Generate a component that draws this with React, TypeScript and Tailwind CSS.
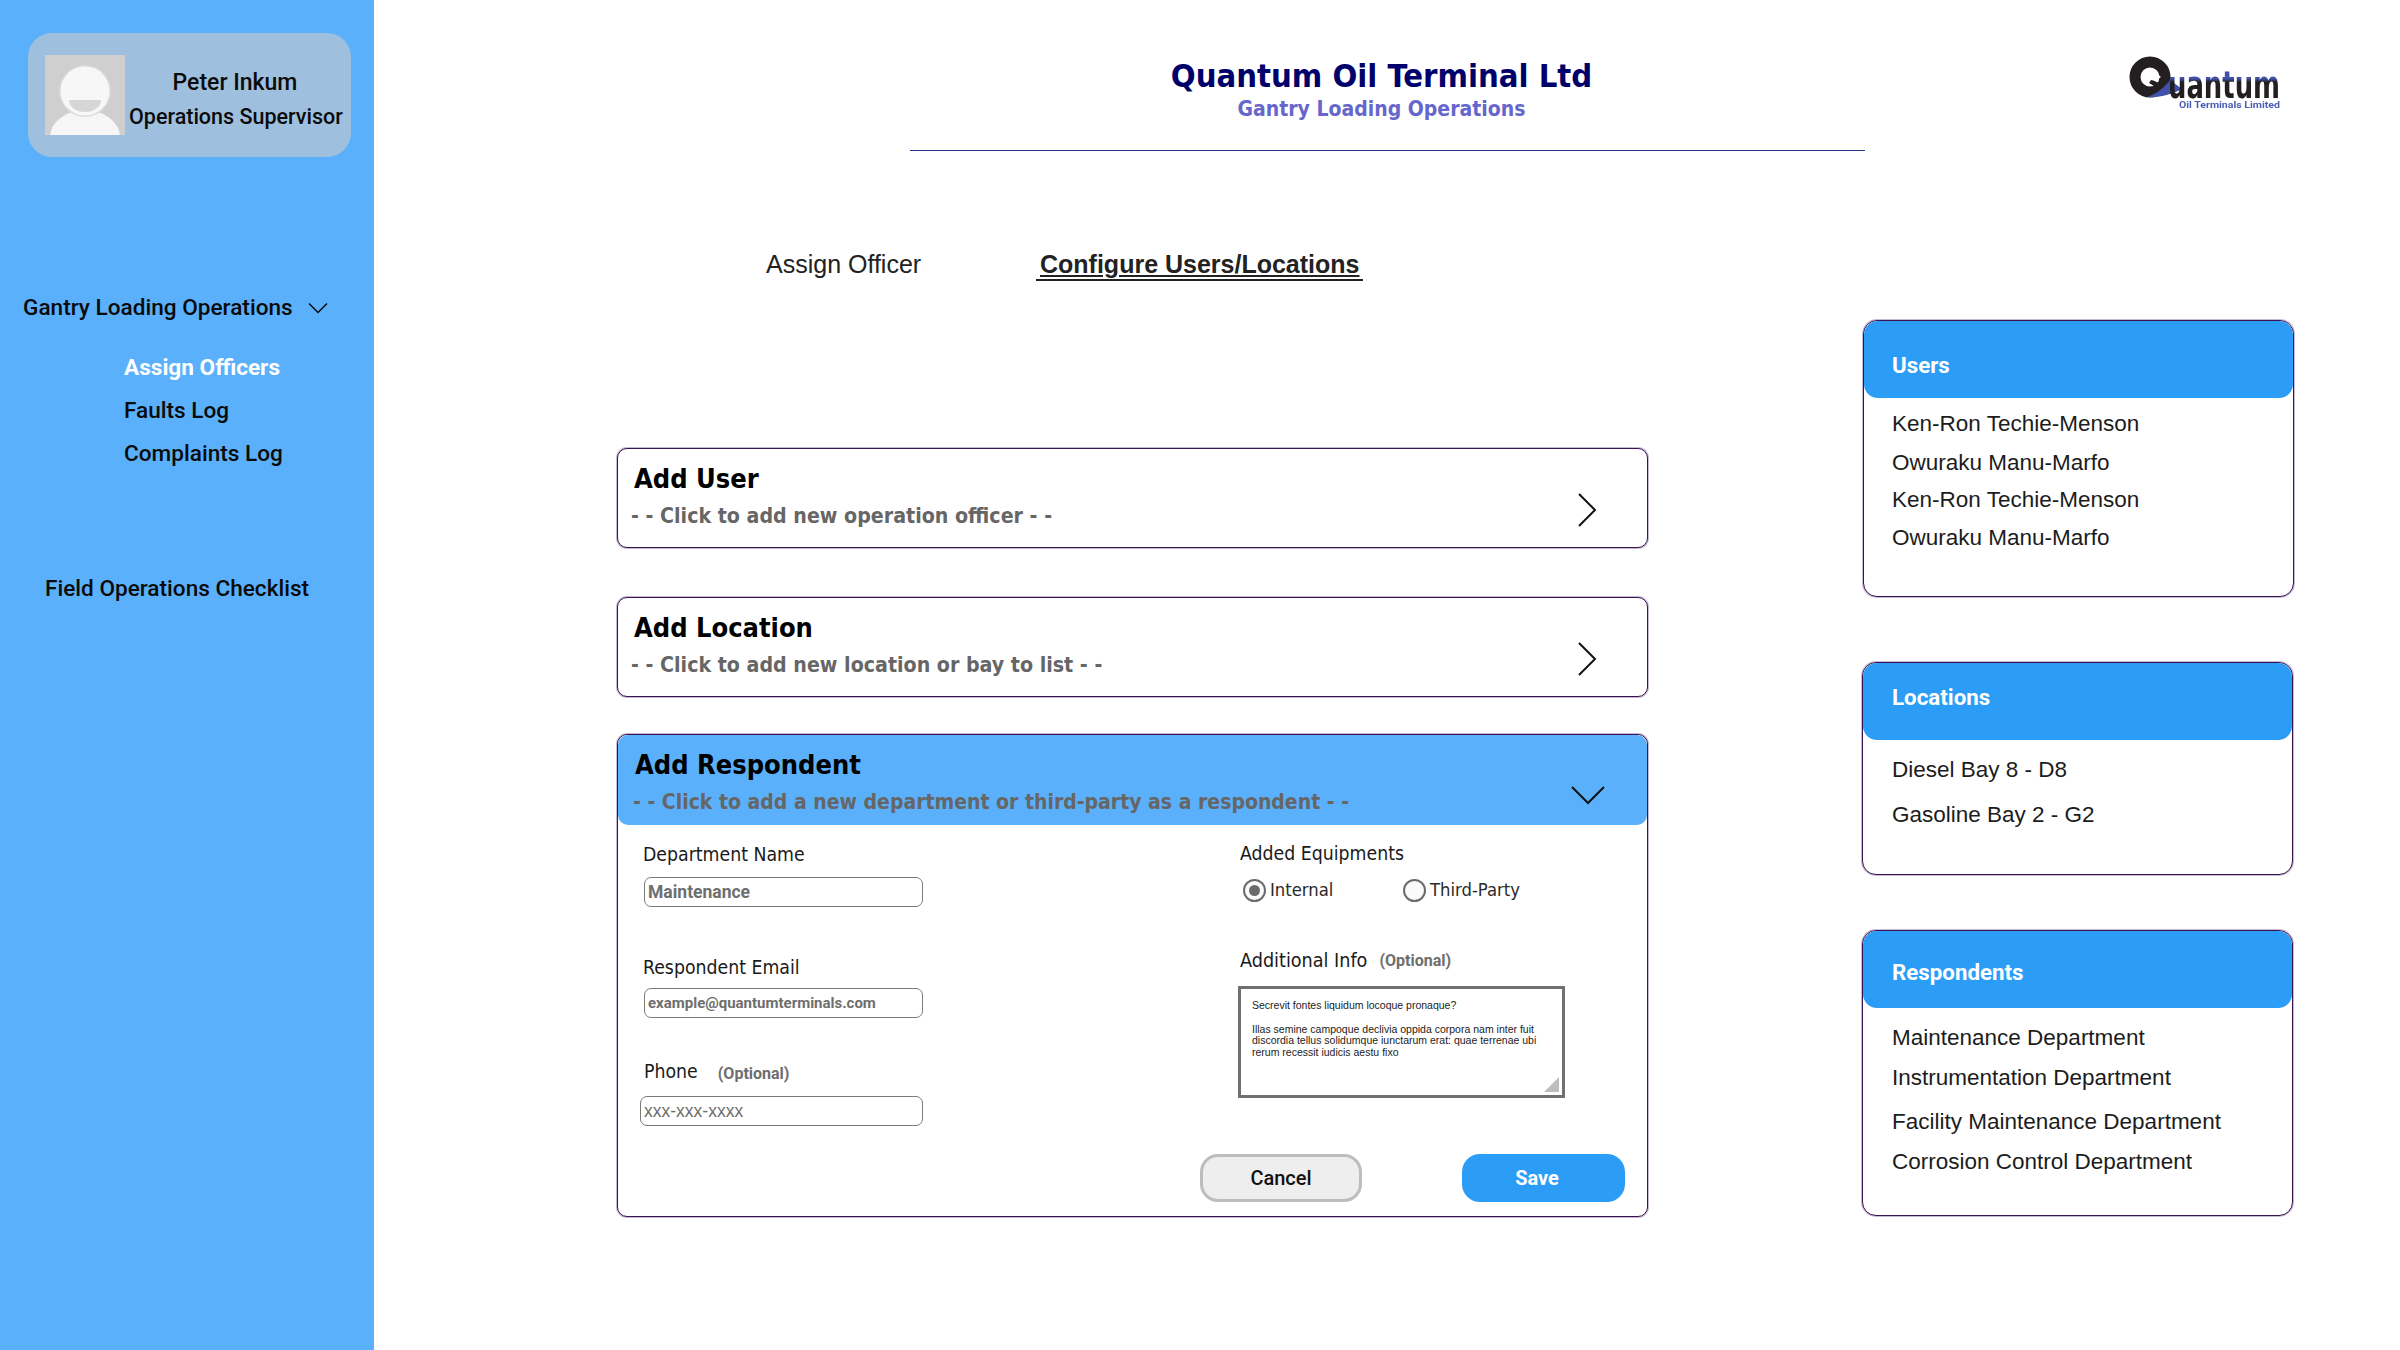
const tahoma = "font-['DejaVu_Sans_Condensed','Noto_Sans',sans-serif]";

const users = [
  { name: "Ken-Ron Techie-Menson", gap: "mt-[11px]" },
  { name: "Owuraku Manu-Marfo", gap: "mt-[9px]" },
  { name: "Ken-Ron Techie-Menson", gap: "mt-[7px]" },
  { name: "Owuraku Manu-Marfo", gap: "mt-[8px]" },
];

const locations = [
  { name: "Diesel Bay 8 - D8", gap: "mt-[15px]" },
  { name: "Gasoline Bay 2 - G2", gap: "mt-[15px]" },
];

const respondents = [
  { name: "Maintenance Department", gap: "mt-[15px]" },
  { name: "Instrumentation Department", gap: "mt-[10px]" },
  { name: "Facility Maintenance Department", gap: "mt-[14px]" },
  { name: "Corrosion Control Department", gap: "mt-[10px]" },
];

function Avatar() {
  return (
    <svg width="80" height="80" viewBox="0 0 80 80" className="shrink-0">
      <rect width="80" height="80" fill="#CFCFCF" />
      <ellipse cx="40" cy="82" rx="35" ry="27" fill="#F6F6F6" />
      <circle cx="40" cy="36" r="26" fill="#DADADA" />
      <circle cx="40" cy="36" r="24.5" fill="#F7F7F7" />
      <path d="M24 45h32a16 12 0 0 1-32 0z" fill="#D6D6D6" />
    </svg>
  );
}

function Logo() {
  return (
    <svg width="200" height="60" viewBox="0 0 200 60" className="shrink-0 blur-[0.4px]">
      <defs>
        <linearGradient id="quantum-fill" gradientUnits="userSpaceOnUse" x1="0" y1="0" x2="0" y2="44">
          <stop offset="0.56" stopColor="#3F51A8" />
          <stop offset="0.64" stopColor="#231F20" />
        </linearGradient>
      </defs>
      <circle cx="23" cy="23" r="15" fill="none" stroke="#231F20" strokeWidth="11" />
      <path d="M14 22c5-5 13-5 20 1l-5 3c-5-1-10-2-15-4z" fill="#fff" />
      <path d="M24 26c6 1 13 6 20 12l-6 2c-6-5-11-8-16-11z" fill="#231F20" />
      <path d="M20 43c9-3 17-9 23-17l12 9c-10 5-22 9-35 8z" fill="#3F51A8" />
      <text x="41" y="44" fontFamily="'DejaVu Sans', sans-serif" fontWeight="700" fontSize="37" textLength="112" lengthAdjust="spacingAndGlyphs" fill="url(#quantum-fill)">uantum</text>
      <text x="52" y="54" fontFamily="'Roboto', sans-serif" fontWeight="700" fontSize="9.5" textLength="101" lengthAdjust="spacingAndGlyphs" fill="#4A5DB5">Oil Terminals Limited</text>
    </svg>
  );
}

function Sidebar() {
  return (
    <aside className="w-[374px] shrink-0 bg-[#5AB0FB] pt-[33px] font-['Roboto',sans-serif] text-[#0B0B0B]">
      <div className="ml-[28px] flex h-[124px] w-[323px] items-start rounded-[24px] bg-[#9EC0DE] pl-[17px] pt-[22px]">
        <Avatar />
        <div className="ml-[4px] w-[212px] text-center font-medium">
          <div className="mt-[11px] h-[34px] text-[23px] leading-[34px]">Peter Inkum</div>
          <div className="h-[34px] whitespace-nowrap text-[21.5px] leading-[34px]">Operations Supervisor</div>
        </div>
      </div>

      <div className="ml-[23px] mt-[137px] flex h-[28px] items-center text-[22.6px] font-medium leading-[28px]">
        <span>Gantry Loading Operations</span>
        <svg width="20" height="12" viewBox="0 0 20 12" fill="none" stroke="#0B0B0B" strokeWidth="1.5" className="ml-[15px]">
          <path d="M1 1.5l9 9 9-9" />
        </svg>
      </div>

      <div className="ml-[124px] mt-[24px] text-[22.6px] font-medium">
        <div className="h-[43px] font-bold leading-[43px] text-white">Assign Officers</div>
        <div className="h-[43px] leading-[43px]">Faults Log</div>
        <div className="h-[43px] leading-[43px]">Complaints Log</div>
      </div>

      <div className="ml-[45px] mt-[100px] h-[28px] text-[22.6px] font-medium leading-[28px]">Field Operations Checklist</div>
    </aside>
  );
}

function Collapsed({ title, hint, gap }: { title: string; hint: string; gap: string }) {
  return (
    <div className={`${gap} flex h-[100px] items-start rounded-[10px] border-[1.5px] border-[#3A1450] bg-white shadow-[0_0_0_1px_#C9BAD4] ${tahoma}`}>
      <div className="flex-1 pl-[12px] pt-[10px]">
        <div className="ml-[4px] h-[40px] text-[27px] font-bold leading-[40px] text-black">{title}</div>
        <div className="ml-px h-[34px] text-[21.2px] font-bold leading-[34px] text-[#666666]">{hint}</div>
      </div>
      <svg width="24" height="36" viewBox="0 0 24 36" fill="none" stroke="#111" strokeWidth="2" className="mr-[48px] mt-[43px]">
        <path d="M4 2l16 16L4 34" />
      </svg>
    </div>
  );
}

function Field({ className, value }: { className: string; value: string }) {
  return (
    <input
      readOnly
      value={value}
      className={`${className} h-[30px] rounded-[7px] border-[1.5px] border-[#7A7A7A] bg-white pl-[3px] text-[#6E6E6E] outline-none`}
    />
  );
}

function Radio({ label, checked, className }: { label: string; checked?: boolean; className: string }) {
  return (
    <div className={`${className} flex items-center`}>
      <div className="flex h-[23px] w-[23px] items-center justify-center rounded-full border-[2.5px] border-[#6B6B6B] bg-[#FAFAFA]">
        {checked && <div className="h-[11px] w-[11px] rounded-full bg-[#6B6B6B]" />}
      </div>
      <span className={`ml-[4px] text-[18.3px] text-[#2A2A2A] ${tahoma}`}>{label}</span>
    </div>
  );
}

function RespondentForm() {
  return (
    <div className="mt-[37px] h-[483px] rounded-[10px] border-[1.5px] border-[#3A1450] bg-white shadow-[0_0_0_1px_#C9BAD4]">
      <div className={`flex h-[90px] items-start rounded-[10px] bg-[#5AB0FB] pl-[14px] pt-[10px] ${tahoma}`}>
        <div className="flex-1">
          <div className="ml-[3px] h-[40px] text-[27px] font-bold leading-[40px] text-black">Add Respondent</div>
          <div className="ml-px h-[34px] text-[21px] font-bold leading-[34px] text-[#666666]">- - Click to add a new department or third-party as a respondent - -</div>
        </div>
        <svg width="36" height="20" viewBox="0 0 36 20" fill="none" stroke="#111" strokeWidth="2" className="mr-[41px] mt-[40px]">
          <path d="M2 2l16 16L34 2" />
        </svg>
      </div>

      <div className="flex">
        <div className={`w-[622px] shrink-0 pl-[25px] pt-[18px] ${tahoma}`}>
          <div className="h-[24px] text-[19.3px] leading-[24px] text-[#1A1A1A]">Department Name</div>
          <Field className="ml-px mt-[10px] block w-[279px] font-['Roboto',sans-serif] text-[17.5px] font-bold" value="Maintenance" />
          <div className="mt-[49px] h-[24px] text-[19.3px] leading-[24px] text-[#1A1A1A]">Respondent Email</div>
          <Field className="ml-px mt-[8px] block w-[279px] font-['Roboto',sans-serif] text-[15px] font-bold" value="example@quantumterminals.com" />
          <div className="ml-px mt-[42px] flex h-[24px] items-center text-[19.3px] leading-[24px] text-[#1A1A1A]">
            <span>Phone</span>
            <span className="ml-[20px] mt-[3px] font-['Roboto',sans-serif] text-[16px] font-bold text-[#6E6E6E]">(Optional)</span>
          </div>
          <Field className="-ml-[3px] mt-[12px] block w-[283px] font-['Liberation_Sans',sans-serif] text-[17.5px]" value="xxx-xxx-xxxx" />
        </div>

        <div className={`pt-[17px] ${tahoma}`}>
          <div className="h-[24px] text-[19.3px] leading-[24px] text-[#1A1A1A]">Added Equipments</div>
          <div className="mt-[12px] flex h-[24px] items-center">
            <Radio label="Internal" checked className="ml-[3px] w-[160px]" />
            <Radio label="Third-Party" className="" />
          </div>
          <div className="mt-[47px] flex h-[24px] items-center text-[19.6px] leading-[24px] text-[#1A1A1A]">
            <span>Additional Info</span>
            <span className="ml-[12px] font-['Roboto',sans-serif] text-[16px] font-bold text-[#6E6E6E]">(Optional)</span>
          </div>
          <div className="relative -ml-[2px] mt-[13px] h-[112px] w-[327px] border-[3px] border-[#707070] bg-white pl-[11px] pt-[11px] font-['Liberation_Sans',sans-serif] text-[10.5px] leading-[11.5px] text-[#222]">
            <p>Secrevit fontes liquidum locoque pronaque?</p>
            <p className="mt-[12px]">Illas semine campoque declivia oppida corpora nam inter fuit<br />discordia tellus solidumque iunctarum erat: quae terrenae ubi<br />rerum recessit iudicis aestu fixo</p>
            <svg width="15" height="15" viewBox="0 0 15 15" className="absolute bottom-[3px] right-[3px]">
              <path d="M15 0v15H0z" fill="#BDBDBD" />
            </svg>
          </div>
          <div className="-ml-[40px] mt-[56px] flex w-[425px] justify-between font-['Roboto',sans-serif] text-[20px]">
            <div className="flex h-[48px] w-[162px] items-center justify-center rounded-[18px] border-[3.5px] border-[#BDBDBD] bg-[#EEEEEE] font-medium text-[#111]">Cancel</div>
            <div className="flex h-[48px] w-[163px] items-center justify-center rounded-[18px] bg-[#2B9DF6] pr-[13px] font-bold text-white">Save</div>
          </div>
        </div>
      </div>
    </div>
  );
}

function Panel({ title, rows, className, titlePad, inset }: { title: string; rows: { name: string; gap: string }[]; className: string; titlePad: string; inset: string }) {
  return (
    <section className={`${className} w-[431px] rounded-[14px] border-[1.5px] border-[#3A1450] bg-white shadow-[0_0_0_1px_#C9BAD4]`}>
      <div className={`${titlePad} ${inset} h-[77px] rounded-[14px] bg-[#2B9DF6] font-['Roboto',sans-serif] text-[22.3px] font-bold leading-[30px] text-white`}>{title}</div>
      <div className={`${inset} font-['Liberation_Sans',sans-serif] text-[22.5px] leading-[30px] text-[#1C1C1C]`}>
        {rows.map((row, i) => (
          <div key={i} className={`${row.gap} h-[30px]`}>{row.name}</div>
        ))}
      </div>
    </section>
  );
}

export default function App() {
  return (
    <div className="flex h-[1350px] w-[2400px] overflow-hidden bg-white">
      <Sidebar />
      <main className="flex-1">
        <header className="flex h-[151px]">
          <div className={`ml-[536px] h-[151px] w-[955px] shrink-0 border-b-[1.5px] border-[#26348A] pr-[12px] pt-[56px] text-center font-bold ${tahoma}`}>
            <div className="h-[40px] text-[32.5px] leading-[40px] text-[#00006B]">Quantum Oil Terminal Ltd</div>
            <div className="h-[26px] text-[21px] leading-[26px] text-[#6666CC]">Gantry Loading Operations</div>
          </div>
          <div className="ml-[262px] pt-[54px]">
            <Logo />
          </div>
        </header>

        <div className="flex">
          <div className="ml-[243px] w-[1031px] shrink-0">
            <nav className="ml-[149px] mt-[96px] flex h-[34px] items-start whitespace-nowrap font-['Liberation_Sans',sans-serif] text-[25px] leading-[34px] text-[#222]">
              <span className="w-[270px]">Assign Officer</span>
              <span className="h-[34px] w-[327px] border-b-[2px] border-[#222] pl-[4px] font-bold underline">Configure Users/Locations</span>
            </nav>
            <Collapsed title="Add User" hint="- - Click to add new operation officer - -" gap="mt-[167px]" />
            <Collapsed title="Add Location" hint="- - Click to add new location or bay to list - -" gap="mt-[49px]" />
            <RespondentForm />
          </div>

          <div className="ml-[215px] mt-[169px]">
            <Panel title="Users" rows={users} className="h-[277px]" titlePad="pt-[29px]" inset="pl-[28px]" />
            <Panel title="Locations" rows={locations} className="-ml-px mt-[65px] h-[213px]" titlePad="pt-[19px]" inset="pl-[29px]" />
            <Panel title="Respondents" rows={respondents} className="-ml-px mt-[55px] h-[286px]" titlePad="pt-[26px]" inset="pl-[29px]" />
          </div>
        </div>
      </main>
    </div>
  );
}
